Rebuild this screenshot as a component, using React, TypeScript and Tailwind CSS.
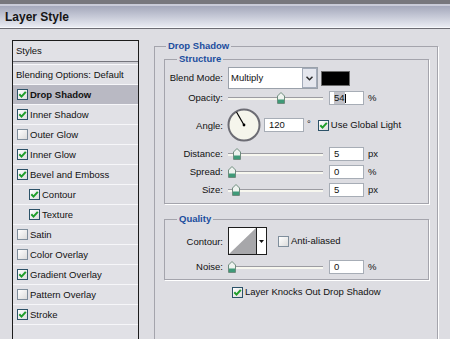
import React from "react";

const FONT = { fontFamily: '"Liberation Sans", Arial, sans-serif' };

function Check({ checked }: { checked: boolean }) {
  return (
    <span
      className={
        "w-[11px] h-[11px] border flex items-center justify-center shrink-0 bg-linear-to-br from-[#ffffff] to-[#dcdcdc] " +
        (checked ? "border-[#2c5268]" : "border-[#7f8e9c]")
      }
    >
      {checked && (
        <svg width="9" height="9" viewBox="0 0 9 9">
          <path d="M1.3 4.3 L3.5 6.6 L7.8 1.8" stroke="#1f9e2a" strokeWidth="2" fill="none" />
        </svg>
      )}
    </span>
  );
}

function Thumb() {
  return (
    <svg width="8" height="12" viewBox="0 0 8 12">
      <path d="M0.5 4 L4 0.5 L7.5 4 L7.5 11.5 L0.5 11.5 Z" fill="#eef3ef" stroke="#6f8c7e" />
      <rect x="1" y="7.5" width="6" height="3.5" fill="#3f9a78" />
    </svg>
  );
}

function Slider({ left }: { left: string }) {
  return (
    <div className="relative w-[95px] h-full flex items-center shrink-0">
      <div className="w-full h-[3px] border-t border-[#9c9ca2] bg-[#f7f7ef]" />
      <div className={"absolute top-1/2 -translate-y-1/2 flex " + left}>
        <Thumb />
      </div>
    </div>
  );
}

function Field({ children }: { children: React.ReactNode }) {
  return (
    <div className="w-[35px] h-[14px] bg-white border border-[#a7adb6] flex items-center pl-[4px] shrink-0">
      {children}
    </div>
  );
}

function Label({ children }: { children: React.ReactNode }) {
  return <div className="w-[58px] text-right shrink-0">{children}</div>;
}

function SliderRow({
  label,
  left,
  value,
  unit,
  cls,
}: {
  label: string;
  left: string;
  value: React.ReactNode;
  unit: string;
  cls: string;
}) {
  return (
    <div className={"flex items-center " + cls}>
      <Label>{label}</Label>
      <div className="ml-[5px] h-full flex">
        <Slider left={left} />
      </div>
      <div className="ml-[6px]">
        <Field>{value}</Field>
      </div>
      <div className="ml-[4px]">{unit}</div>
    </div>
  );
}

const styles: { name: string; checked: boolean; indent?: boolean; bold?: boolean; sel?: boolean }[] = [
  { name: "Drop Shadow", checked: true, bold: true, sel: true },
  { name: "Inner Shadow", checked: true },
  { name: "Outer Glow", checked: false },
  { name: "Inner Glow", checked: true },
  { name: "Bevel and Emboss", checked: true },
  { name: "Contour", checked: true, indent: true },
  { name: "Texture", checked: true, indent: true },
  { name: "Satin", checked: false },
  { name: "Color Overlay", checked: false },
  { name: "Gradient Overlay", checked: true },
  { name: "Pattern Overlay", checked: false },
  { name: "Stroke", checked: true },
];

export default function App() {
  return (
    <div
      className="w-[450px] h-[339px] overflow-hidden bg-[#dddde2] text-[#111] text-[9.5px] leading-[12px]"
      style={FONT}
    >
      {/* title bar */}
      <div className="h-[29px] border-t-4 border-t-[#77777d] border-b border-b-[#6c6c74] bg-linear-to-b from-[#9ea2b6] to-[#eceef5] shadow-[inset_0_2px_0_#c9cbd8,inset_0_-1px_0_#f6f7fb] flex items-center pl-[5px] pt-[1px]">
        <span className="text-[12px] leading-[14px] font-bold text-[#151515]">Layer Style</span>
      </div>

      <div className="flex pt-[11px] pl-[12px]">
        {/* Styles list */}
        <div className="w-[127px] h-[320px] border border-[#1c1c1c] bg-[#e1e1e6] flex flex-col shrink-0">
          <div className="h-[20px] flex items-center pl-[3px]">Styles</div>
          <div className="h-[4px] border-t border-t-[#74747c] border-b border-b-[#f8f8fb] bg-[#cfcfd5]" />
          <div className="h-[20px] border-b border-[#f6f6f9] flex items-center pl-[3px]">
            Blending Options: Default
          </div>
          {styles.map((s) => (
            <div
              key={s.name}
              className={
                "h-[20px] border-b border-[#f6f6f9] flex items-center " +
                (s.indent ? "pl-[16px] " : "pl-[4px] ") +
                (s.sel ? "bg-[#b9b9c3]" : "")
              }
            >
              <Check checked={s.checked} />
              <span className={"ml-[2px] " + (s.bold ? "font-bold" : "")}>{s.name}</span>
            </div>
          ))}
          <div className="h-[20px] border-b border-[#f6f6f9]" />
        </div>

        {/* Drop Shadow group */}
        <fieldset className="ml-[15px] w-[284px] h-[320px] min-w-0 border border-[#a4a4ac] shadow-[1px_1px_0_#ffffff] shrink-0">
          <legend className="ml-[11px] px-[2px] leading-[12px] font-bold text-[#1b4d9e]">Drop Shadow</legend>
          <div className="pl-[9px] pr-[8px] pt-[1px] flex flex-col">
            {/* Structure */}
            <fieldset className="min-w-0 border border-[#a4a4ac] shadow-[1px_1px_0_#ffffff] pb-[6px] flex flex-col">
              <legend className="ml-[12px] px-[2px] leading-[12px] font-bold text-[#1b4d9e]">Structure</legend>

              <div className="mt-[2px] h-[22px] flex items-center">
                <Label>Blend Mode:</Label>
                <div className="ml-[5px] w-[90px] h-full bg-white border border-[#9aa1aa] flex items-center">
                  <span className="flex-1 pl-[2px]">Multiply</span>
                  <div className="w-[15px] h-full border border-[#a3abb9] bg-[#e5e7ee] flex items-center justify-center">
                    <svg width="7" height="5" viewBox="0 0 7 5">
                      <path d="M0.5 0.8 L3.5 3.8 L6.5 0.8" stroke="#2a2a2a" strokeWidth="1.5" fill="none" />
                    </svg>
                  </div>
                </div>
                <div className="ml-[3px] w-[29px] h-[15px] bg-black border border-[#6a6a6a]" />
              </div>

              <SliderRow
                label="Opacity:"
                left="left-[49px]"
                cls="mt-[2px] h-[14px]"
                unit="%"
                value={
                  <span className="flex items-center">
                    <span className="bg-[#c2c2c8]">54</span>
                    <span className="w-px h-[9px] bg-black" />
                  </span>
                }
              />

              <div className="mt-[3px] h-[34px] flex items-center">
                <Label>
                  <span className="relative top-[1px]">Angle:</span>
                </Label>
                <div className="ml-[4px] flex">
                  <svg width="34" height="34" viewBox="0 0 34 34">
                    <circle cx="17" cy="17" r="15.5" fill="#f5f5ec" stroke="#6c6c74" strokeWidth="2" />
                    <line x1="17" y1="17" x2="9.5" y2="4" stroke="#000" strokeWidth="1.2" />
                    <circle cx="17" cy="17" r="1.4" fill="#000" />
                  </svg>
                </div>
                <div className="ml-[3px] w-[40px] h-[14px] bg-white border border-[#a7adb6] flex items-center pl-[4px]">
                  120
                </div>
                <span className="ml-[3px] self-start mt-[10px]">°</span>
                <div className="ml-[7px] flex items-center">
                  <Check checked />
                  <span className="ml-[2px]">Use Global Light</span>
                </div>
              </div>

              <SliderRow label="Distance:" left="left-[5px]" cls="mt-[5px] h-[14px]" unit="px" value="5" />
              <SliderRow label="Spread:" left="left-[0px]" cls="mt-[4px] h-[14px]" unit="%" value="0" />
              <SliderRow label="Size:" left="left-[4px]" cls="mt-[4px] h-[14px]" unit="px" value="5" />
            </fieldset>

            {/* Quality */}
            <fieldset className="mt-[9px] min-w-0 border border-[#a4a4ac] shadow-[1px_1px_0_#ffffff] pb-[5px] flex flex-col">
              <legend className="ml-[12px] px-[2px] leading-[12px] font-bold text-[#1b4d9e]">Quality</legend>

              <div className="mt-[2px] h-[28px] flex items-center">
                <Label>
                  <span className="relative top-[1px]">Contour:</span>
                </Label>
                <div className="ml-[5px] w-[39px] h-[28px] border border-[#1e1e1e] bg-white flex">
                  <svg width="27" height="26" viewBox="0 0 27 26">
                    <polygon points="0,26 27,0 27,26" fill="#a7a7aa" />
                  </svg>
                  <div className="flex-1 border-l border-[#1e1e1e] flex items-center justify-center">
                    <svg width="5" height="3" viewBox="0 0 5 3">
                      <polygon points="0,0 5,0 2.5,3" fill="#111" />
                    </svg>
                  </div>
                </div>
                <div className="ml-[11px] flex items-center">
                  <Check checked={false} />
                  <span className="ml-[2px]">Anti-aliased</span>
                </div>
              </div>

              <SliderRow label="Noise:" left="left-[0px]" cls="mt-[5px] h-[14px]" unit="%" value="0" />
            </fieldset>

            <div className="mt-[6px] h-[12px] flex items-center pl-[68px]">
              <Check checked />
              <span className="ml-[2px]">Layer Knocks Out Drop Shadow</span>
            </div>
          </div>
        </fieldset>
      </div>
    </div>
  );
}
